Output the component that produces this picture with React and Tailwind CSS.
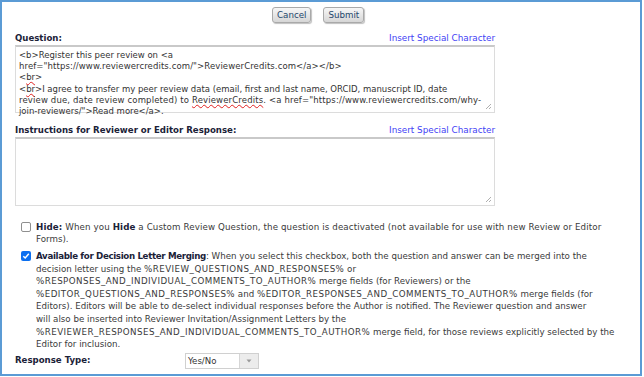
const font = { fontFamily: '"DejaVu Sans", Verdana, sans-serif' }

const Button = ({ children }) => (
  <button className="h-[16px] px-[4px] rounded-[3px] border border-[#a9a9a9] bg-gradient-to-b from-[#f7f7f7] to-[#d6d6d6] text-[8.7px] leading-none text-[#24476b] shadow-[1px_1px_1px_rgba(0,0,0,0.25)]">
    {children}
  </button>
)

const Squiggle = ({ children }) => (
  <span className="underline decoration-wavy decoration-[#e02020] decoration-[0.5px] underline-offset-[1px]">{children}</span>
)

const Field = ({ children }) => <span className="tracking-[0.45px]">{children}</span>

const FakeTextarea = ({ children, height }) => (
  <div className={`relative w-[480px] ${height} border border-[#dcdcdc] border-t-2 border-t-[#c9c9c9] bg-white px-[3px] pt-[3px] text-[8.5px] leading-[11.2px] text-[#333] whitespace-pre`}>
    {children}
    <svg className="absolute right-[2px] bottom-[2px]" width="7" height="7" viewBox="0 0 7 7">
      <path d="M6 1 L1 6 M6 4 L4 6" stroke="#9a9a9a" strokeWidth="0.8" />
    </svg>
  </div>
)

const LabelRow = ({ label }) => (
  <div className="flex w-[480px] items-end justify-between leading-[12px]">
    <span className="font-bold text-[8.6px] text-[#1b2238]">{label}</span>
    <span className="text-[8.8px] text-[#3f3ff5]">Insert Special Character</span>
  </div>
)

export default function App() {
  return (
    <div className="w-[644px] h-[377px] bg-white" style={font}>
      <div className="w-[642px] h-[376px] border-2 border-[#5b9bd5] pl-[13px]">
        <div className="flex gap-[12px] pl-[257px] mt-[5px]">
          <Button>Cancel</Button>
          <Button>Submit</Button>
        </div>

        <div className="mt-[9px]">
          <LabelRow label="Question:" />
        </div>
        <div className="mt-[1px]">
          <FakeTextarea height="h-[68px]">
            <div>{'<b>Register this peer review on <a'}</div>
            <div className="tracking-[0.1px]">{'href="https://www.reviewercredits.com/">ReviewerCredits.com</a></b>'}</div>
            <div>{'<'}<Squiggle>br</Squiggle>{'>'}</div>
            <div>{'<'}<Squiggle>br</Squiggle>{'>I agree to transfer my peer review data (email, first and last name, ORCID, manuscript ID, date'}</div>
            <div className="tracking-[0.15px]">{'review due, date review completed) to '}<Squiggle>ReviewerCredits</Squiggle>{'. <a href="https://www.reviewercredits.com/why-'}</div>
            <div>{'join-reviewers/">Read more</a>.'}</div>
          </FakeTextarea>
        </div>

        <div className="mt-[11px]">
          <LabelRow label="Instructions for Reviewer or Editor Response:" />
        </div>
        <div className="mt-[1px]">
          <FakeTextarea height="h-[69px]" />
        </div>

        <div className="mt-[15px] flex pl-[6px] text-[8.7px] leading-[12px] text-[#3a3a3a]">
          <div className="mt-[1px] w-[10px] h-[10px] rounded-[2px] border border-[#8f8f8f] bg-white" />
          <div className="ml-[5px] whitespace-nowrap">
            <div className="tracking-[0.11px]"><b className="text-[#1b2238]">Hide:</b> When you <b className="text-[#1b2238]">Hide</b> a Custom Review Question, the question is deactivated (not available for use with new Review or Editor</div>
            <div>Forms).</div>
          </div>
        </div>

        <div className="mt-[5px] flex pl-[6px] text-[8.7px] leading-[12.6px] text-[#3a3a3a]">
          <div className="mt-[1px] w-[10px] h-[10px] rounded-[2px] bg-[#0b6ff0] flex items-center justify-center">
            <svg width="8" height="8" viewBox="0 0 8 8">
              <path d="M1.3 4.2 L3.2 6 L6.8 1.8" stroke="white" strokeWidth="1.5" fill="none" />
            </svg>
          </div>
          <div className="ml-[5px] whitespace-nowrap">
            <div><b className="text-[#1b2238] tracking-[-0.35px]">Available for Decision Letter Merging</b>: When you select this checkbox, both the question and answer can be merged into the</div>
            <div>decision letter using the <Field>%REVIEW_QUESTIONS_AND_RESPONSES%</Field> or</div>
            <div><Field>%RESPONSES_AND_INDIVIDUAL_COMMENTS_TO_AUTHOR%</Field> merge fields (for Reviewers) or the</div>
            <div><Field>%EDITOR_QUESTIONS_AND_RESPONSES%</Field> and <Field>%EDITOR_RESPONSES_AND_COMMENTS_TO_AUTHOR%</Field> merge fields (for</div>
            <div>Editors). Editors will be able to de-select individual responses before the Author is notified. The Reviewer question and answer</div>
            <div>will also be inserted into Reviewer Invitation/Assignment Letters by the</div>
            <div><Field>%REVIEWER_RESPONSES_AND_INDIVIDUAL_COMMENTS_TO_AUTHOR%</Field> merge field, for those reviews explicitly selected by the</div>
            <div>Editor for inclusion.</div>
          </div>
        </div>

        <div className="mt-[2px] flex items-center">
          <span className="w-[170px] font-bold text-[8.6px] text-[#1b2238]">Response Type:</span>
          <div className="flex h-[16px] border border-[#d0d0d0]">
            <div className="w-[53px] px-[2px] bg-white text-[8.6px] leading-[14px] text-[#333]">Yes/No</div>
            <div className="w-[19px] bg-[#ececec] border-l border-[#d6d6d6] flex items-center justify-center">
              <svg width="6" height="4" viewBox="0 0 6 4"><path d="M0.5 0.5 L5.5 0.5 L3 3.5 Z" fill="#9a9a9a" /></svg>
            </div>
          </div>
        </div>
      </div>
    </div>
  )
}
